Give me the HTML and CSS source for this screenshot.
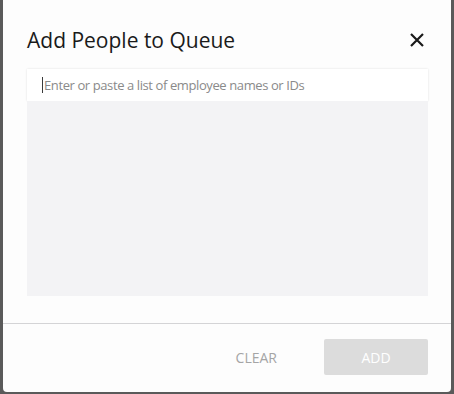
FILE: index.html
```html
<!DOCTYPE html>
<html>
<head>
<meta charset="utf-8">
<link rel="stylesheet" href="styles.css">
</head>
<body>
<div class="backdrop">
  <div class="modal">
    <div class="header">
      <h1 class="title">Add People to Queue</h1>
      <button class="close" aria-label="Close">
        <svg width="16" height="16" viewBox="0 0 16 16"><path d="M2 2 L14 14 M14 2 L2 14" stroke="#1a1a1a" stroke-width="2.2" fill="none"/></svg>
      </button>
    </div>
    <div class="body">
      <div class="input"><span class="caret"></span><span class="placeholder">Enter or paste a list of employee names or IDs</span></div>
      <div class="list"></div>
    </div>
    <div class="footer">
      <button class="btn-clear">CLEAR</button>
      <button class="btn-add">ADD</button>
    </div>
  </div>
</div>
</body>
</html>
```
FILE: styles.css
```css
html, body {
  margin: 0;
  padding: 0;
  width: 454px;
  height: 394px;
  overflow: hidden;
}
body {
  background: #5a5a5a;
  font-family: "Open Sans", "Liberation Sans", sans-serif;
}
.backdrop {
  padding: 0 3px 2px 3px;
  height: 392px;
}
.modal {
  background: #fdfdfd;
  height: 392px;
  border-radius: 0 0 4px 4px;
  display: flex;
  flex-direction: column;
}
.header {
  display: flex;
  align-items: center;
  justify-content: space-between;
  padding: 10px 26px 0 24px;
  height: 59px;
}
.title {
  margin: 0;
  font-size: 21px;
  font-weight: 400;
  color: #1a1a1a;
  line-height: 30px;
}
.close {
  background: none;
  border: none;
  padding: 0;
  width: 16px;
  height: 16px;
  display: flex;
}
.body {
  padding: 0 23px 0 24px;
  height: 227px;
  display: flex;
  flex-direction: column;
}
.input {
  height: 32px;
  background: #fff;
  box-shadow: 0 0 2px rgba(0,0,0,0.12);
  display: flex;
  align-items: center;
  padding-left: 15px;
}
.caret {
  width: 1px;
  height: 16px;
  background: #3a3a3a;
  margin-right: 1px;
}
.placeholder {
  font-size: 13px;
  letter-spacing: -0.4px;
  color: #8a8a8a;
}
.list {
  height: 195px;
  background: #f3f3f5;
}
.footer {
  border-top: 1px solid #d4d4d6;
  margin-top: 27px;
  display: flex;
  justify-content: flex-end;
  align-items: center;
  padding: 15px 23px 0 0;
  gap: 47px;
}
.btn-clear {
  background: none;
  border: none;
  font-family: inherit;
  font-size: 14px;
  color: #a5a5a5;
  padding: 0;
}
.btn-add {
  width: 104px;
  height: 36px;
  background: #dcdcdc;
  border: none;
  border-radius: 2px;
  color: #fff;
  font-family: inherit;
  font-size: 14px;
}
```
